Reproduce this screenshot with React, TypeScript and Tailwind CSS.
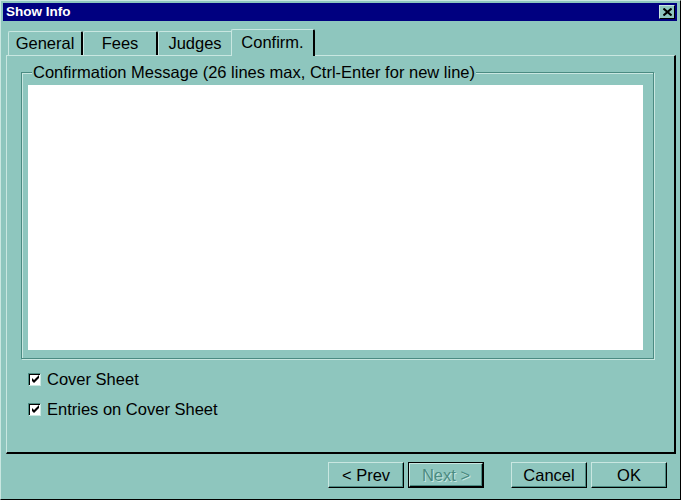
import React from "react";

function Tab({ label, w, selected }: { label: string; w: string; selected?: boolean }) {
  if (selected) {
    return (
      <div
        className={`${w} h-[27px] -mb-px relative z-10 bg-[#8ec6be] border-l border-t border-l-[#c9e7e1] border-t-[#c9e7e1] border-r-2 border-r-black rounded-tl-[2px] rounded-tr-[2px] -ml-[2px] flex items-start justify-center pt-[3px] text-[16.5px] leading-[18px] text-black`}
      >
        {label}
      </div>
    );
  }
  return (
    <div
      className={`${w} h-[24px] mt-[2px] bg-[#8ec6be] border-l border-t border-l-[#c9e7e1] border-t-[#c9e7e1] border-r-2 border-r-black rounded-tl-[2px] rounded-tr-[2px] flex items-start justify-center pt-[2px] text-[16.5px] leading-[18px] text-black`}
    >
      {label}
    </div>
  );
}

function Check({ label }: { label: string }) {
  return (
    <div className="flex items-center h-[14px]">
      <div className="w-[13px] h-[13px] bg-white border border-t-[#4b8b82] border-l-[#4b8b82] border-r-[#c9e7e1] border-b-[#c9e7e1] shadow-[inset_1px_1px_0_#000] flex items-center justify-center">
        <svg width="9" height="9" viewBox="0 0 9 9" className="mt-[1px] ml-[1px]">
          <path d="M1 3 L3 5 L8 0 L8 3 L3 8 L1 6 Z" fill="#000" />
        </svg>
      </div>
      <span className="ml-[6px] text-[16.5px] leading-[18px] text-black">{label}</span>
    </div>
  );
}

function Btn({ label, disabled, focused }: { label: string; disabled?: boolean; focused?: boolean }) {
  const inner = (
    <div
      className={`w-full h-full border border-t-[#c9e7e1] border-l-[#c9e7e1] border-r-black border-b-black shadow-[inset_-1px_-1px_0_#4b8b82] flex items-center justify-center pb-[1px] text-[16.5px] leading-[18px] ${
        disabled ? "text-[#4b8b82] [text-shadow:1px_1px_0_#c9e7e1]" : "text-black"
      }`}
    >
      {label}
    </div>
  );
  if (focused) {
    return <div className="w-[76px] h-[26px] border border-black">{inner}</div>;
  }
  return <div className="w-[76px] h-[26px]">{inner}</div>;
}

export default function App() {
  return (
    <div
      className="w-[681px] h-[500px] bg-[#8ec6be] border-l border-t border-l-[#c9e7e1] border-t-[#c9e7e1] border-r border-b border-r-black border-b-black flex flex-col pl-[2px] pt-[2px] pr-[2px] overflow-hidden"
      style={{ fontFamily: '"Liberation Sans", Arial, sans-serif' }}
    >
      {/* Title bar */}
      <div className="h-[18px] w-[674px] bg-[#000080] flex items-center justify-between pl-[3px] pr-[2px]">
        <span className="text-white font-bold text-[13.5px] leading-[14px]">Show Info</span>
        <div className="w-[16px] h-[14px] bg-[#8ec6be] border border-t-[#c9e7e1] border-l-[#c9e7e1] border-r-black border-b-black flex items-center justify-center">
          <svg width="9" height="8" viewBox="0 0 9 8">
            <path d="M0.5 0.5 L8.5 7.5 M8.5 0.5 L0.5 7.5" stroke="#000" strokeWidth="2" />
          </svg>
        </div>
      </div>

      {/* Tabs */}
      <div className="mt-[8px] ml-[5px] flex items-end h-[26px]">
        <Tab label="General" w="w-[75px]" />
        <Tab label="Fees" w="w-[75px]" />
        <Tab label="Judges" w="w-[75px]" />
        <Tab label="Confirm." w="w-[84px]" selected />
      </div>

      {/* Panel */}
      <div className="ml-[3px] w-[670px] h-[399px] border-l border-t border-l-[#c9e7e1] border-t-[#c9e7e1] border-r-2 border-b-2 border-r-black border-b-black flex flex-col pl-[14px] pt-[16px]">
        <div className="relative w-[633px] h-[287px] border border-[#4b8b82] shadow-[inset_1px_1px_0_#c9e7e1,1px_1px_0_#c9e7e1]">
          <span className="absolute left-[10px] -top-[10px] bg-[#8ec6be] px-[1px] text-[16.5px] leading-[18px] text-black">
            Confirmation Message (26 lines max, Ctrl-Enter for new line)
          </span>
          <div className="mt-[12px] ml-[6px] w-[615px] h-[265px] bg-white" />
        </div>
        <div className="mt-[13px] ml-[7px] flex flex-col gap-[16px]">
          <Check label="Cover Sheet" />
          <Check label="Entries on Cover Sheet" />
        </div>
      </div>

      {/* Buttons */}
      <div className="mt-[8px] flex ml-[325px]">
        <Btn label="< Prev" />
        <div className="ml-[4px]">
          <Btn label="Next >" disabled focused />
        </div>
        <div className="ml-[27px]">
          <Btn label="Cancel" />
        </div>
        <div className="ml-[4px]">
          <Btn label="OK" />
        </div>
      </div>
    </div>
  );
}
